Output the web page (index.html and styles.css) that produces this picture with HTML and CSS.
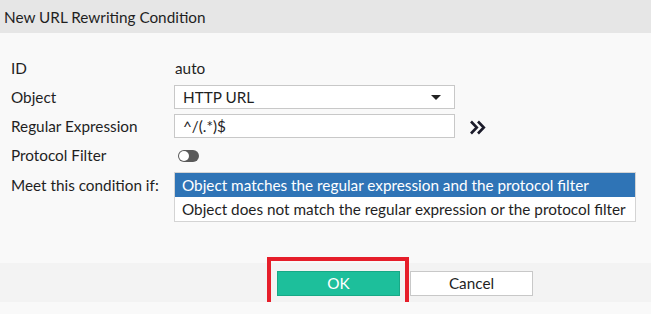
FILE: index.html
```html
<!DOCTYPE html>
<html lang="en">
<head>
    <meta charset="UTF-8">
    <title>New URL Rewriting Condition</title>
    <link rel="stylesheet" href="styles.css">
</head>
<body>
    <div class="dialog">
        <div class="dialog-header">New URL Rewriting Condition</div>

        <div class="dialog-body">
            <div class="form-row">
                <span class="label">ID</span>
                <span class="value">auto</span>
            </div>
            <div class="form-row">
                <span class="label">Object</span>
                <div class="select">
                    <span>HTTP URL</span>
                    <span class="caret"></span>
                </div>
            </div>
            <div class="form-row">
                <span class="label">Regular Expression</span>
                <div class="input">^/(.*)$</div>
                <svg class="expand" width="18" height="15" viewBox="0 0 18 15">
                    <path d="M2 1.5 L7.8 7.5 L2 13.5 M9 1.5 L14.8 7.5 L9 13.5" fill="none" stroke="#1b1b2a" stroke-width="2.6"/>
                </svg>
            </div>
            <div class="form-row">
                <span class="label">Protocol Filter</span>
                <span class="toggle"><span class="knob"></span></span>
            </div>
            <div class="form-row top">
                <span class="label">Meet this condition if:</span>
                <ul class="choice-list">
                    <li class="selected">Object matches the regular expression and the protocol filter</li>
                    <li>Object does not match the regular expression or the protocol filter</li>
                </ul>
            </div>
        </div>

        <div class="dialog-footer">
            <div class="ok-wrap">
                <button class="btn btn-ok">OK</button>
                <span class="highlight"></span>
            </div>
            <button class="btn btn-cancel">Cancel</button>
        </div>
    </div>
</body>
</html>
```

FILE: styles.css
```css
:root {
    --text-color: #1f1f1f;
    --border-color: #c8c8c8;
    --select-color: #2f74b6;
    --ok-color: #1dbf9b;
    --font-family: Lato, "Open Sans", Arial, sans-serif;
}
body, html {
    margin: 0;
    font-family: var(--font-family);
    color: var(--text-color);
    background-color: #f9f9f9;
    font-size: 15.3px;
}
.dialog-header {
    height: 33px;
    line-height: 35px;
    padding-left: 4px;
    background-color: #e6e6e6;
}
.dialog-body {
    padding: 23px 0 0 11px;
    box-sizing: border-box;
    height: 230px;
}
.form-row {
    display: flex;
    align-items: center;
    height: 24px;
    line-height: 26px;
    margin-bottom: 5px;
}
.form-row.top {
    align-items: flex-start;
    margin-top: 1px;
}
.label {
    width: 163px;
    flex-shrink: 0;
}
.value {
    padding-left: 1px;
}
.select, .input {
    width: 281px;
    height: 24px;
    box-sizing: border-box;
    border: 1px solid var(--border-color);
    background-color: #fff;
    display: flex;
    align-items: center;
    padding: 0 8px;
}
.select {
    justify-content: space-between;
}
.caret {
    width: 0;
    height: 0;
    border-left: 5px solid transparent;
    border-right: 5px solid transparent;
    border-top: 5px solid #222;
    margin-right: 5px;
}
.expand {
    margin-left: 14px;
    margin-top: 3px;
}
.toggle {
    position: relative;
    width: 21px;
    height: 12px;
    margin-left: 4px;
    margin-top: 2px;
    border-radius: 6px;
    background-color: #5a5a5a;
}
.knob {
    position: absolute;
    top: 1px;
    left: 1px;
    width: 10px;
    height: 10px;
    border-radius: 50%;
    background-color: #fff;
}
.choice-list {
    list-style: none;
    margin: 0;
    padding: 0;
    width: 460px;
    border: 1px solid #d4d4d4;
    background-color: #fff;
}
.choice-list li {
    height: 24px;
    line-height: 25px;
    padding-left: 7px;
}
.choice-list li.selected {
    background-color: var(--select-color);
    color: #fff;
}
.dialog-footer {
    display: flex;
    align-items: center;
    gap: 10px;
    height: 39px;
    padding-left: 277px;
    background-color: #f3f3f3;
}
.ok-wrap {
    position: relative;
    display: flex;
}
.btn {
    height: 25px;
    width: 123px;
    font-family: var(--font-family);
    font-size: 15.3px;
    border: 1px solid var(--border-color);
    padding: 0;
    margin-top: 1px;
}
.btn-ok {
    background-color: var(--ok-color);
    border-color: #17a986;
    color: #fff;
}
.btn-cancel {
    background-color: #fff;
    color: var(--text-color);
}
.highlight {
    position: absolute;
    left: -10px;
    top: -13px;
    width: 142px;
    height: 50px;
    box-sizing: border-box;
    border: 4px solid #e61e2a;
}
```
